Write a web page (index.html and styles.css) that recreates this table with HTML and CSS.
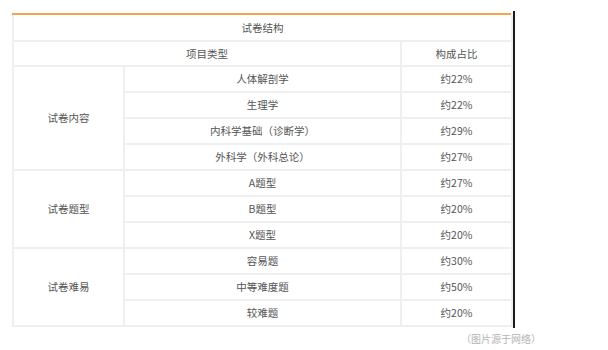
FILE: index.html
```
<!DOCTYPE html>
<html lang="zh-CN">
<head>
<meta charset="utf-8">
<link rel="stylesheet" href="styles.css">
</head>
<body>
<div class="page">
  <div class="frame">
    <table class="exam">
      <colgroup>
        <col class="c1"><col class="c2"><col class="c3">
      </colgroup>
      <tr class="title"><td colspan="3">试卷结构</td></tr>
      <tr class="head"><td colspan="2">项目类型</td><td>构成占比</td></tr>
      <tr class="row"><td rowspan="4" class="group">试卷内容</td><td>人体解剖学</td><td>约22%</td></tr>
      <tr class="row"><td>生理学</td><td>约22%</td></tr>
      <tr class="row"><td>内科学基础（诊断学）</td><td>约29%</td></tr>
      <tr class="row last"><td>外科学（外科总论）</td><td>约27%</td></tr>
      <tr class="row"><td rowspan="3" class="group">试卷题型</td><td>A题型</td><td>约27%</td></tr>
      <tr class="row"><td>B题型</td><td>约20%</td></tr>
      <tr class="row last"><td>X题型</td><td>约20%</td></tr>
      <tr class="row"><td rowspan="3" class="group">试卷难易</td><td>容易题</td><td>约30%</td></tr>
      <tr class="row"><td>中等难度题</td><td>约50%</td></tr>
      <tr class="row"><td>较难题</td><td>约20%</td></tr>
    </table>
  </div>
  <div class="caption">（图片源于网络）</div>
</div>
</body>
</html>
```
FILE: styles.css
```
html, body {
  margin: 0;
  padding: 0;
  background: #ffffff;
}
.page {
  padding: 11px 0 0 12px;
  font-family: "Noto Sans CJK SC", "Noto Sans", sans-serif;
}
.frame {
  width: 501px;
  padding-top: 2px;
  padding-bottom: 1px;
  border-right: 2px solid #1c1c1c;
}
.exam {
  width: 499px;
  border-collapse: collapse;
  table-layout: fixed;
  font-size: 10.5px;
  color: #555555;
  border-top: 2px solid #f5a54c;
}
.c1 { width: 111px; }
.c2 { width: 277px; }
.c3 { width: 111px; }
.exam td {
  border: 2px solid #efefef;
  text-align: center;
  padding: 0;
  line-height: 14px;
}
.exam .title td {
  height: 25px;
  border-top: 2px solid #f5a54c;
}
.exam .head td {
  height: 23px;
}
.exam .row td {
  height: 24px;
}
.caption {
  margin: 4px 0 0 449px;
  font-size: 10px;
  line-height: 14px;
  color: #b4b4b4;
}
```
